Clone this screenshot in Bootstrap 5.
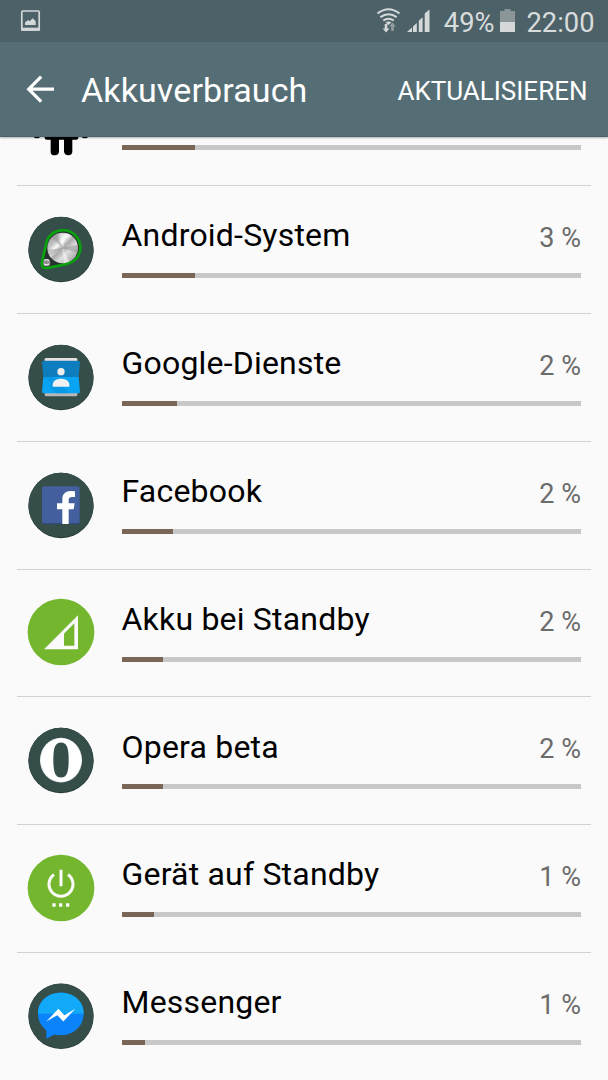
<!DOCTYPE html>
<html lang="de">
<head>
<meta charset="utf-8">
<meta name="viewport" content="width=device-width, initial-scale=1">
<title>Akkuverbrauch</title>
<link rel="stylesheet" href="https://cdn.jsdelivr.net/npm/bootstrap@5.3.0/dist/css/bootstrap.min.css">
<style>
body{font-family:Roboto,"Liberation Sans",sans-serif;background:#fafafa;color:#000;height:1080px}
.status{height:42px;background:#4d6268;color:#d9dcdd;font-size:27.3px;line-height:46px;padding-right:13.500px}
.status-pct{margin-right:32px}
.appbar{height:95px;background:#556e75;color:#fff;border-bottom:1px solid #4a636c;box-shadow:0 1px 2px rgba(0,0,0,.3);z-index:2;padding-right:20.500px}
.appbar h1{font-size:34px;line-height:40px;font-weight:400;letter-spacing:.12px;margin-left:23px;padding-top:2px}
.refresh{font-size:26px;line-height:32px;color:#fff;text-decoration:none;padding-top:3px}
.usage{height:943px}
.usage-list{margin-top:-78.8px}
.usage-row{height:127.857px;border-bottom:1px solid #d2d2d2;margin:0 17px;padding:0 10px 0 3px}
.usage-row:last-child{border-bottom:0}
.app-icon{width:90px;height:90px;margin-top:18.800px;flex:none}
.info{margin-left:11.500px;padding-top:30px}
.name-line{height:42px}
.name{font-size:32px;line-height:40px;letter-spacing:.2px;margin-top:-.8px}
.pct{font-size:27px;line-height:40px;color:#6b6b6b;padding-top:2px}
.meter{height:5px;background:#c8c8c8;border-radius:0;margin-top:15px}
.meter .progress-bar{background:#796656}
</style>
</head>
<body class="overflow-hidden d-flex flex-column">
<div class="status d-flex position-relative">
  <svg width="608" height="42" class="position-absolute top-0 start-0" aria-hidden="true">
    <g fill="none" stroke="#d5d8d9"><rect x="21.8" y="11" width="17.4" height="19" rx="1" stroke-width="1.7"/><path d="M21 29.2h19" stroke-width="3"/></g>
    <path d="M25 25v-2.5l3-2.5 1.7 1.3 3-3 3 3V25z" fill="#d5d8d9"/>
    <g fill="none" stroke="#d5d8d9" stroke-width="2.1"><path d="M377.5 13.5q11-8.5 22 0"/><path d="M380.3 17.2q8.200-6 16.400 0"/><path d="M383.200 20.500q5.300-3.600 10.600 0"/></g>
    <path d="M385.500 22.500q3-1.800 6 0l-3 2.500z" fill="#d5d8d9"/>
    <path d="M384.700 24h2.700v4.500h2.100l-3.400 4-3.400-4h2z" fill="#d5d8d9"/>
    <path d="M391.200 31v-4.500h-2l3.300-3.900 3.300 3.900h-2V31z" fill="#939da0"/>
    <path d="M407 32l5-4.500V32zM413 32v-5.600l3.800-3.400v9zM418.800 32V20.800l3.800-3.500V32zM424.700 32V13.500l4.800-4V32z" fill="#d5d8d9"/>
    <path d="M500 22V11h4.500V9h6v2h4.500v11z" fill="#8b9699"/><path d="M500 22h15v10h-15z" fill="#d5d8d9"/>
  </svg>
  <span class="ms-auto status-pct">49%</span>
  <span>22:00</span>
</div>
<header class="appbar d-flex align-items-center position-relative">
  <svg width="34" height="34" viewBox="0 0 34 34" class="ms-4" aria-label="Zurück"><path d="M17.200 5.500L4.700 18 17.200 30.500M4.700 18H30" transform="translate(0 -.8)" fill="none" stroke="#fff" stroke-width="3.200"/></svg>
  <h1 class="mb-0">Akkuverbrauch</h1>
  <a href="#" class="refresh ms-auto">AKTUALISIEREN</a>
</header>
<main class="usage overflow-hidden">
<div class="usage-list">

<div class="usage-row d-flex"><svg class="app-icon" viewBox="0 0 270 270"><path d="M74 100h101v83q0 5-6 5h-12v35q0 12-12 12t-13-12v-35h-15v35q0 12-13 12t-12-12v-35H80q-6 0-6-5z"/><rect x="39" y="100" width="23" height="84" rx="11"/><rect x="183" y="100" width="23" height="84" rx="11"/></svg>
<div class="info flex-grow-1"><div class="name-line"></div><div class="progress meter"><div class="progress-bar" style="width:16.1%"></div></div></div></div>

<div class="usage-row d-flex"><svg class="app-icon" viewBox="0 0 270 270"><defs><linearGradient id="metal" x1="0" y1="0" x2="1" y2="1"><stop offset="0" stop-color="#8c8c8c"/><stop offset=".27" stop-color="#c4c4c4"/><stop offset=".38" stop-color="#f8f8f8"/><stop offset=".5" stop-color="#aaa"/><stop offset=".65" stop-color="#ddd"/><stop offset="1" stop-color="#8a8a8a"/></linearGradient></defs><circle cx="123" cy="134" r="98" fill="#253b38"/><circle cx="123" cy="132.500" r="97" fill="#364e4a"/><path d="M79 114C90 63 173 60 181 124c2 33-22 49-47 54l-52 11c-12 2-19-6-16-18z" fill="#27322f" stroke="#08a30c" stroke-width="8"/><circle cx="128" cy="129" r="46" fill="url(#metal)"/><path d="M128 129L94 98l16-11zM128 129l45-10v25zM128 129l-44 5 3 18z" fill="#777" opacity=".35"/><path d="M128 129l-9-43h21zM128 129l3 46 17-5z" fill="#fff" opacity=".5"/><circle cx="80" cy="173" r="11" fill="#8f8f8f"/><path d="M73 166q8-5 14 1M72 177q8 5 15-1" stroke="#e2e2e2" stroke-width="4" fill="none"/></svg>
<div class="info flex-grow-1"><div class="name-line d-flex justify-content-between"><span class="name">Android-System</span><span class="pct">3 %</span></div><div class="progress meter"><div class="progress-bar" style="width:16.1%"></div></div></div></div>

<div class="usage-row d-flex"><svg class="app-icon" viewBox="0 0 270 270"><circle cx="123" cy="134" r="98" fill="#253b38"/><circle cx="123" cy="132.500" r="97" fill="#364e4a"/><path d="M74 84v-5q0-4 5-4h88q5 0 5 4v5z" fill="#e6e1de"/><path d="M74 180h98v6q0 4-5 4H79q-5 0-5-4z" fill="#b7b7b7"/><path d="M66 88q0-5 6-5h102q6 0 6 5l-4 44H70z" fill="#0d7dbe"/><path d="M70 132h106l4 44q0 5-6 5H72q-6 0-6-5z" fill="#09a5f4"/><path d="M70 132h29l49 49h-40l-22-22 8-10z" fill="#058fd8" opacity=".55"/><circle cx="123" cy="116" r="11" fill="#eee"/><path d="M98 161v-6c0-24 50-24 50 0v6z" fill="#f1f1f1"/></svg>
<div class="info flex-grow-1"><div class="name-line d-flex justify-content-between"><span class="name">Google-Dienste</span><span class="pct">2 %</span></div><div class="progress meter"><div class="progress-bar" style="width:12.1%"></div></div></div></div>

<div class="usage-row d-flex"><svg class="app-icon" viewBox="0 0 270 270"><circle cx="123" cy="133.500" r="98" fill="#253b38"/><circle cx="123" cy="132" r="97" fill="#364e4a"/><rect x="66" y="76" width="113" height="113" rx="6" fill="#435f9d"/><path d="M66 181v2q0 6 6 6h101q6 0 6-6v-2q0 5-6 5H72q-6 0-6-5z" fill="#304983"/><path d="M127 189v-44h-16v-18h16v-12c0-16 10-25 25-25l13 1v17h-9c-8 0-10 4-10 10v9h18l-3 18h-15v44z" fill="#fff"/></svg>
<div class="info flex-grow-1"><div class="name-line d-flex justify-content-between"><span class="name">Facebook</span><span class="pct">2 %</span></div><div class="progress meter"><div class="progress-bar" style="width:11.1%"></div></div></div></div>

<div class="usage-row d-flex"><svg class="app-icon" viewBox="0 0 270 270"><g transform="translate(0 1)"><circle cx="123" cy="131" r="100" fill="#74b62d"/><path d="M72 183L174 81v102zM132 136v36h31v-67z" fill="#fafafa" fill-rule="evenodd"/></g></svg>
<div class="info flex-grow-1"><div class="name-line d-flex justify-content-between"><span class="name">Akku bei Standby</span><span class="pct">2 %</span></div><div class="progress meter"><div class="progress-bar" style="width:9.1%"></div></div></div></div>

<div class="usage-row d-flex"><svg class="app-icon" viewBox="0 0 270 270"><g transform="translate(0 1.5)"><circle cx="123" cy="132" r="98" fill="#253b38"/><circle cx="123" cy="130.500" r="97" fill="#364e4a"/><ellipse cx="123" cy="131" rx="63" ry="67" fill="#e2e5e4"/><ellipse cx="123" cy="130.500" rx="61" ry="65" fill="#fff"/><path d="M123 78c17 0 23 14 23 52s-6 53-23 53-23-15-23-53 6-52 23-52z" fill="#364e4a"/></g></svg>
<div class="info flex-grow-1"><div class="name-line d-flex justify-content-between"><span class="name">Opera beta</span><span class="pct">2 %</span></div><div class="progress meter"><div class="progress-bar" style="width:9.1%"></div></div></div></div>

<div class="usage-row d-flex"><svg class="app-icon" viewBox="0 0 270 270"><g transform="translate(0 2)"><circle cx="123" cy="130" r="100" fill="#74b62d"/><path d="M102 89.500A36 36 0 1 0 144 89.500M123 75v50" fill="none" stroke="#fafafa" stroke-width="9"/><path d="M97 176h10v10H97zM117 176h10v10h-10zM138 176h10v10h-10z" fill="#fafafa"/></g></svg>
<div class="info flex-grow-1"><div class="name-line d-flex justify-content-between"><span class="name">Gerät auf Standby</span><span class="pct">1 %</span></div><div class="progress meter"><div class="progress-bar" style="width:7.1%"></div></div></div></div>

<div class="usage-row d-flex"><svg class="app-icon" viewBox="0 0 270 270"><g transform="translate(0 2.500)"><circle cx="123" cy="130.500" r="98" fill="#253b38"/><circle cx="123" cy="129" r="97" fill="#364e4a"/><path d="M54 123C54 39 191 39 191 123c-1 48-47 72-88 62l-24 13v-26c-15-11-25-28-25-49z" fill="#0a83fb"/><path d="M54 123C54 39 191 39 191 123z" fill="#11a9f8"/><path d="M79 146l36-38 18 19 33-19-36 38-18-19z" fill="#fff"/></g></svg>
<div class="info flex-grow-1"><div class="name-line d-flex justify-content-between"><span class="name">Messenger</span><span class="pct">1 %</span></div><div class="progress meter"><div class="progress-bar" style="width:5.1%"></div></div></div></div>

</div>
</main>
<script src="https://cdn.jsdelivr.net/npm/bootstrap@5.3.0/dist/js/bootstrap.bundle.min.js"></script>
</body>
</html>
